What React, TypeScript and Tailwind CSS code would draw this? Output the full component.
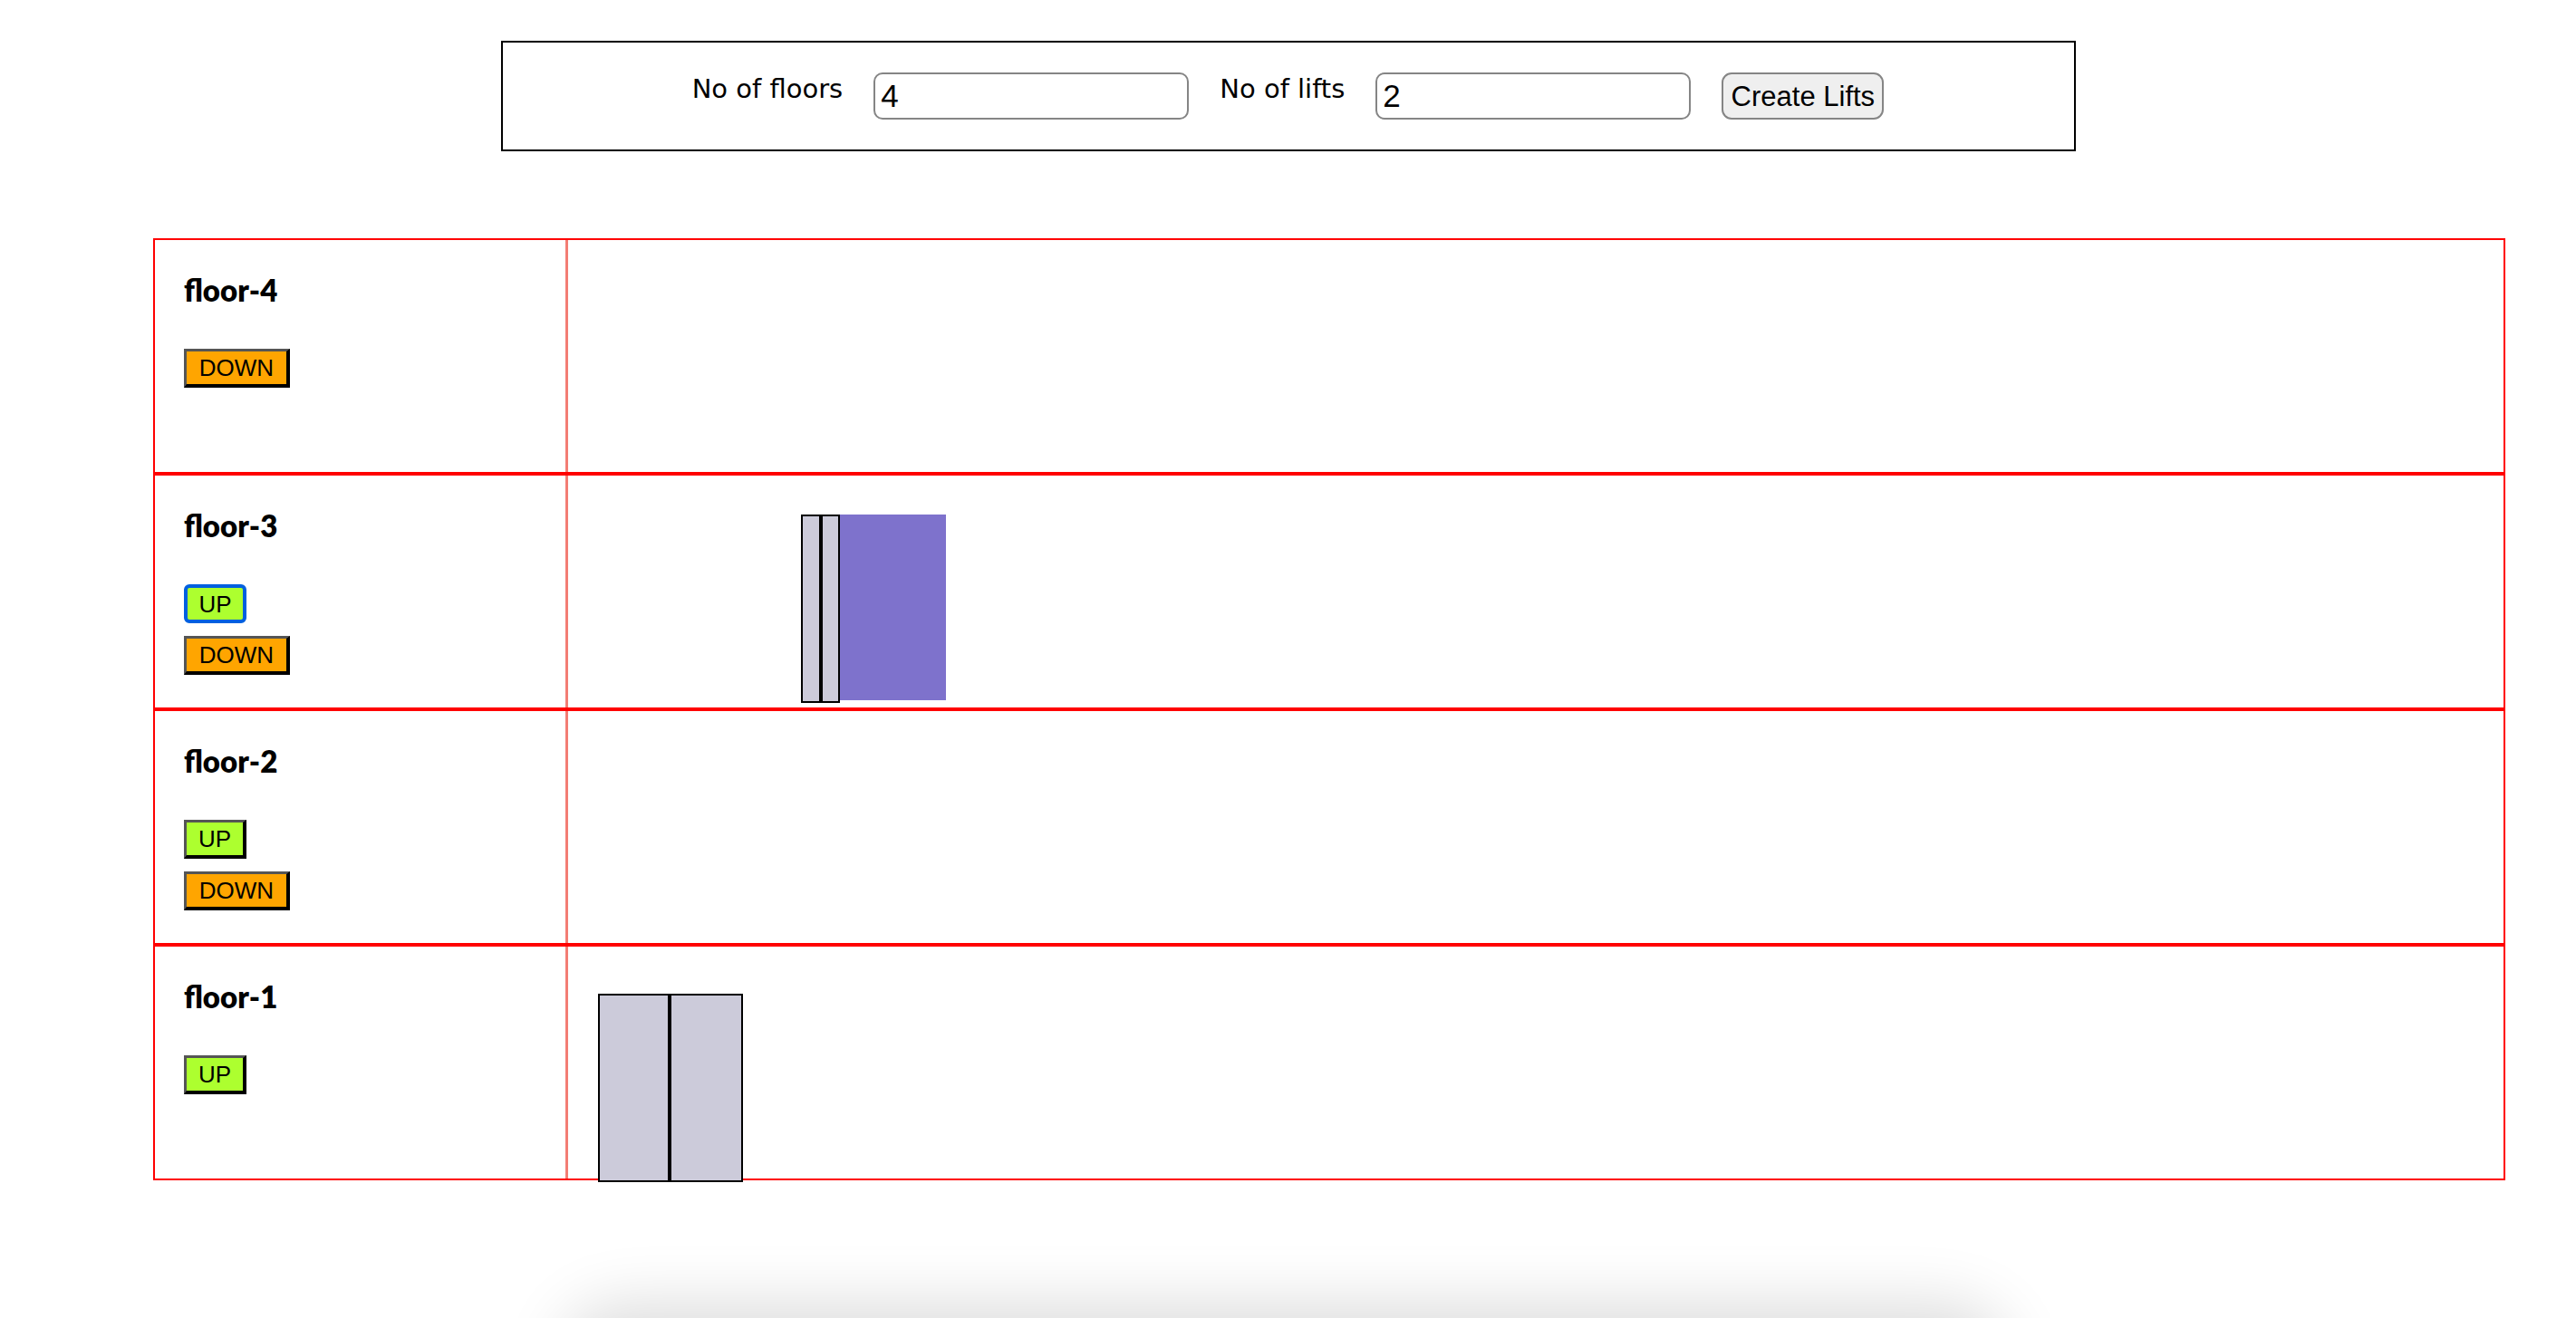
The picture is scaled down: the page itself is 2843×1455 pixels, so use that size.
import { useState } from "react";

type Floor = { id: number; up: boolean; down: boolean };

const floors: Floor[] = [
  { id: 4, up: false, down: true },
  { id: 3, up: true, down: true },
  { id: 2, up: true, down: true },
  { id: 1, up: true, down: false },
];

const lifts = [
  { id: 1, left: 491, top: 834, doors: [79, 81] },
  { id: 2, left: 715, top: 305, doors: [22, 21] },
];

function CallButton({ label, focused }: { label: "UP" | "DOWN"; focused?: boolean }) {
  const color = label === "UP" ? "bg-[#adff2f]" : "bg-[#ffa500]";
  const width = label === "UP" ? "w-[69px]" : "w-[117px]";
  const border = focused
    ? "border-4 border-[#0060df] rounded-[6px]"
    : "border-t-[3px] border-l-[3px] border-b-4 border-r-4 border-t-[#555555] border-l-[#555555] border-b-black border-r-black";
  return (
    <button
      className={`${width} ${color} ${border} flex h-[43px] items-center justify-center font-['Liberation_Sans',Arial,sans-serif] text-[26px] leading-none text-black`}
    >
      {label}
    </button>
  );
}

function Lift({ doors }: { doors: number[] }) {
  return (
    <div className="h-[205px] w-[160px] bg-[#7e72cc]">
      <div className="flex h-[208px]">
        <div className="box-border h-full border-2 border-black bg-[#cccbda]" style={{ width: doors[0] }} />
        <div
          className="box-border h-full border-y-2 border-r-2 border-l-2 border-black bg-[#cccbda]"
          style={{ width: doors[1] }}
        />
      </div>
    </div>
  );
}

function NumberField({ value, onChange }: { value: string; onChange: (v: string) => void }) {
  return (
    <input
      type="text"
      value={value}
      onChange={(e) => onChange(e.target.value)}
      className="h-[52px] w-[348px] rounded-[10px] border-2 border-[#858585] px-[6px] font-['Liberation_Sans',Arial,sans-serif] text-[35px] leading-[40px] text-black outline-none"
    />
  );
}

export default function App() {
  const [floorCount, setFloorCount] = useState("4");
  const [liftCount, setLiftCount] = useState("2");

  return (
    <div className="relative h-[1455px] w-full overflow-hidden bg-white">
      <div className="mx-auto mt-[45px] flex h-[122px] w-[1738px] justify-center border-2 border-black pt-[33px]">
        <div className="flex items-start gap-[34px]">
          <label className="mt-px font-['DejaVu_Sans',sans-serif] text-[29px] leading-[34px] text-black">No of floors</label>
          <NumberField value={floorCount} onChange={setFloorCount} />
          <label className="mt-px font-['DejaVu_Sans',sans-serif] text-[29px] leading-[34px] text-black">No of lifts</label>
          <NumberField value={liftCount} onChange={setLiftCount} />
          <button className="h-[52px] w-[179px] rounded-[11px] border-2 border-[#858585] bg-[#efefef] font-['Liberation_Sans',Arial,sans-serif] text-[31px] leading-none text-black">
            Create Lifts
          </button>
        </div>
      </div>

      <div className="relative ml-[169px] mt-[96px] w-[2596px]">
        {floors.map((floor) => (
          <div key={floor.id} className="flex h-[260px] border-2 border-[#ff0000]">
            <div className="w-[456px] shrink-0 border-r-[3px] border-[#f37d74] pl-[32px] pt-[35px]">
              <h3 className="font-['Lato',sans-serif] text-[33px] font-extrabold leading-[40px] text-black">floor-{floor.id}</h3>
              <div className="mt-[45px] flex flex-col items-start gap-[14px]">
                {floor.up && <CallButton label="UP" focused={floor.id === 3} />}
                {floor.down && <CallButton label="DOWN" />}
              </div>
            </div>
            <div className="flex-1" />
          </div>
        ))}

        {lifts.map((lift) => (
          <div key={lift.id} className="absolute" style={{ left: lift.left, top: lift.top }}>
            <Lift doors={lift.doors} />
          </div>
        ))}
      </div>

      <div className="pointer-events-none fixed left-[645px] top-[1465px] h-[120px] w-[1545px] rounded-[40px] bg-white shadow-[0_0_70px_25px_rgba(0,0,0,0.14)]" />
    </div>
  );
}
